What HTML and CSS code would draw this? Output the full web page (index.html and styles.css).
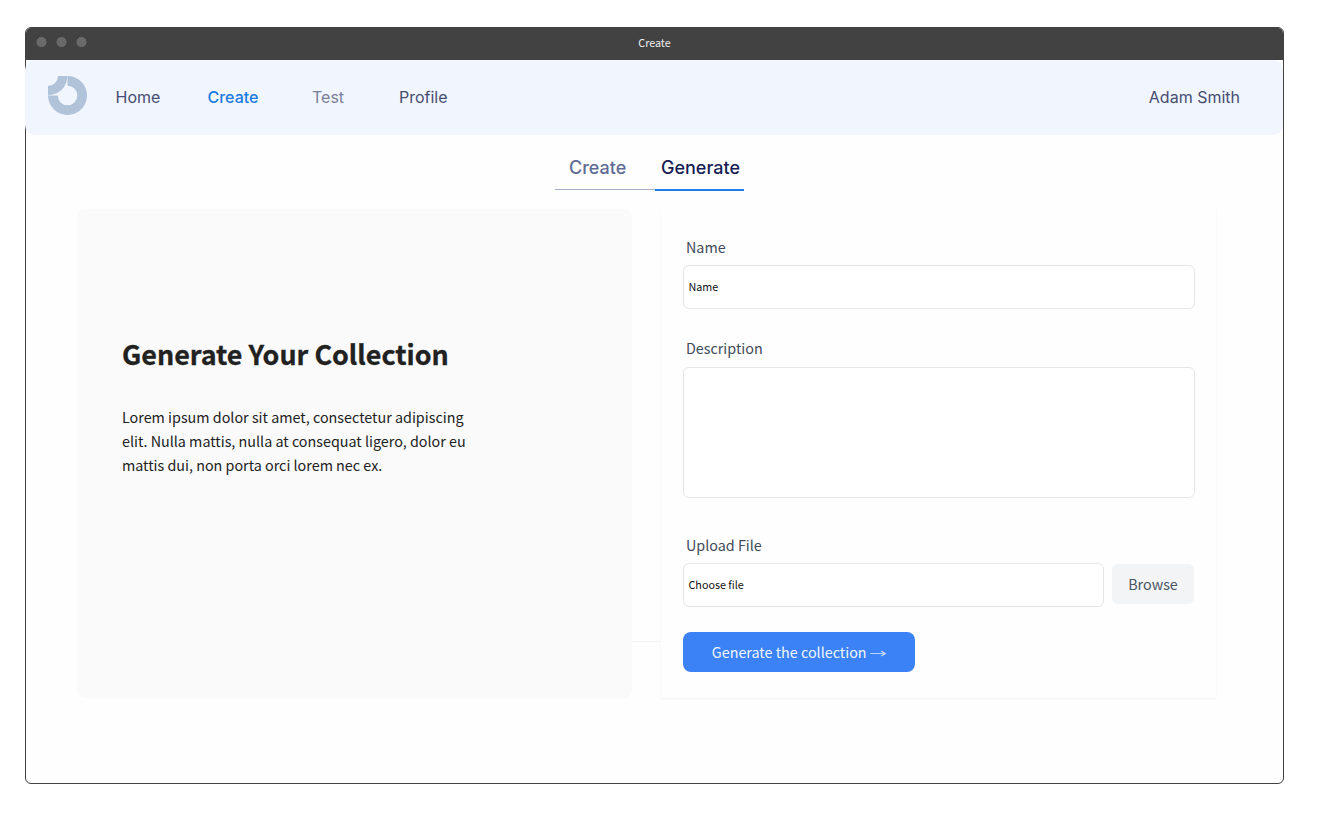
FILE: index.html
```html
<!DOCTYPE html>
<html lang="en">
<head>
<meta charset="utf-8">
<title>Create</title>
<link rel="stylesheet" href="styles.css">
</head>
<body>
<div class="window">
  <div class="titlebar">
    <div class="dots"><span class="dot"></span><span class="dot"></span><span class="dot"></span></div>
    <span class="window-title">Create</span>
  </div>
  <header class="header">
    <svg class="logo" viewBox="0 0 39 39" fill="#b0c3d8">
      <path d="M19.5 0A19.5 19.5 0 1 1 0 19.5H9.7A9.8 9.8 0 1 0 19.5 9.7Z"/>
      <path d="M10 0H19.3A19.3 19.3 0 0 1 0 19.3V10A10 10 0 0 0 10 0Z"/>
    </svg>
    <nav class="nav">
      <a class="nav-home">Home</a>
      <a class="nav-create">Create</a>
      <a class="nav-test">Test</a>
      <a class="nav-profile">Profile</a>
    </nav>
    <span class="user">Adam Smith</span>
  </header>
  <div class="tabs">
    <a class="tab">Create</a>
    <a class="tab tab-active">Generate</a>
  </div>
  <main class="content">
    <section class="intro">
      <h1 class="heading">Generate Your Collection</h1>
      <p class="text">Lorem ipsum dolor sit amet, consectetur adipiscing<br>elit. Nulla mattis, nulla at consequat ligero, dolor eu<br>mattis dui, non porta orci lorem nec ex.</p>
    </section>
    <div class="gutter"></div>
    <form class="form">
      <label class="label">Name</label>
      <div class="field name-field">Name</div>
      <label class="label">Description</label>
      <div class="field description-field"></div>
      <label class="label">Upload File</label>
      <div class="upload">
        <div class="field file-field">Choose file</div>
        <button class="browse" type="button">Browse</button>
      </div>
      <button class="submit" type="button">Generate the collection <span class="arrow">→</span></button>
    </form>
  </main>
</div>
</body>
</html>
```
FILE: styles.css
```css
* { box-sizing: border-box; }
body { margin: 0; padding: 27px 0 0 25px; background: #fff; font-family: "Noto Sans CJK SC", sans-serif; }
.window { width: 1259px; height: 757px; border: 1px solid #424242; border-radius: 6px; background: #fefefe; }
.titlebar { height: 32px; background: #424242; border-radius: 5px 5px 0 0; display: grid; grid-template-columns: 1fr auto 1fr; align-items: center; }
.dots { padding: 0 0 4px 10px; display: flex; }
.dot { width: 20px; height: 10px; background: radial-gradient(circle at 5.5px 5px, #696969 4.7px, transparent 5.3px); }
.window-title { color: #eee; font-size: 10.75px; line-height: 16px; padding-bottom: 2px; }
.header { height: 75px; margin-left: -1px; background: #f0f5fe; border-radius: 10px; display: flex; align-items: center; padding: 0 43px 0 23px; font: 16px/24px Inter, sans-serif; color: #474d70; }
.logo { width: 39px; height: 39px; margin-bottom: 4px; }
.nav { display: flex; margin: 0 0 2px 28.5px; }
.nav-home { width: 92px; }
.nav-create { width: 104.5px; color: #1a7be0; font-weight: 500; }
.nav-test { width: 87px; color: #7a7f99; }
.user { margin: 0 0 2px auto; }
.tabs { display: flex; align-items: flex-start; margin: 16px 0 0 529px; height: 40px; font: 500 18px/34px Inter, sans-serif; }
.tab { width: 100px; height: 39px; padding-left: 14px; color: #5f6b94; border-bottom: 1px solid #a5aec6; }
.tab-active { width: 89px; height: 40px; padding-left: 6px; color: #171d54; border-bottom: 2px solid #1b7de2; }
.content { display: flex; margin: 18px 0 0 51px; }
.intro { width: 555px; height: 489px; padding: 121px 45px 0; background: #fafafa; border-radius: 8px; color: #212121; }
.heading { margin: 0; font-size: 26.9px; line-height: 48px; font-weight: 700; white-space: nowrap; -webkit-text-stroke: .3px #212121; }
.text { margin: 27px 0 0; font-size: 14.33px; line-height: 24px; white-space: nowrap; }
.gutter { width: 29px; height: 433px; border-bottom: 1px solid #f5f5f5; }
.form { width: 555px; height: 489px; padding: 26px 21px 0 22px; display: flex; flex-direction: column; align-items: flex-start; box-shadow: 0 1px 2px rgba(0,0,0,.05); background: #fefefe; }
.label { font-size: 14.33px; line-height: 24px; color: #414a5a; padding-left: 3px; }
.field { width: 512px; border: 1px solid #e4e6e9; border-radius: 6px; font-size: 10.75px; color: #111; padding: 0 0 2px 4.5px; display: flex; align-items: center; background: #fff; }
.name-field { height: 44px; margin: 6px 0 27px; }
.description-field { height: 131px; margin: 7px 0 35px; }
.upload { display: flex; align-items: flex-start; gap: 8px; margin: 6px 0 25px; }
.file-field { width: 421px; height: 44px; }
.browse { width: 82px; height: 40px; margin-top: 1px; border: 0; border-radius: 6px; padding: 0 0 2px; background: #f2f4f6; color: #4b5563; font: 14.33px "Noto Sans CJK SC", sans-serif; }
.submit { width: 232px; height: 40px; border: 0; border-radius: 8px; padding: 0 0 2px; background: #3b82f6; color: #f0f6ff; font: 14.33px "Noto Sans CJK SC", sans-serif; }
.arrow { display: inline-block; transform: translateY(1px) scale(1.2, .8); margin: 0 1px; opacity: .85; }
```
